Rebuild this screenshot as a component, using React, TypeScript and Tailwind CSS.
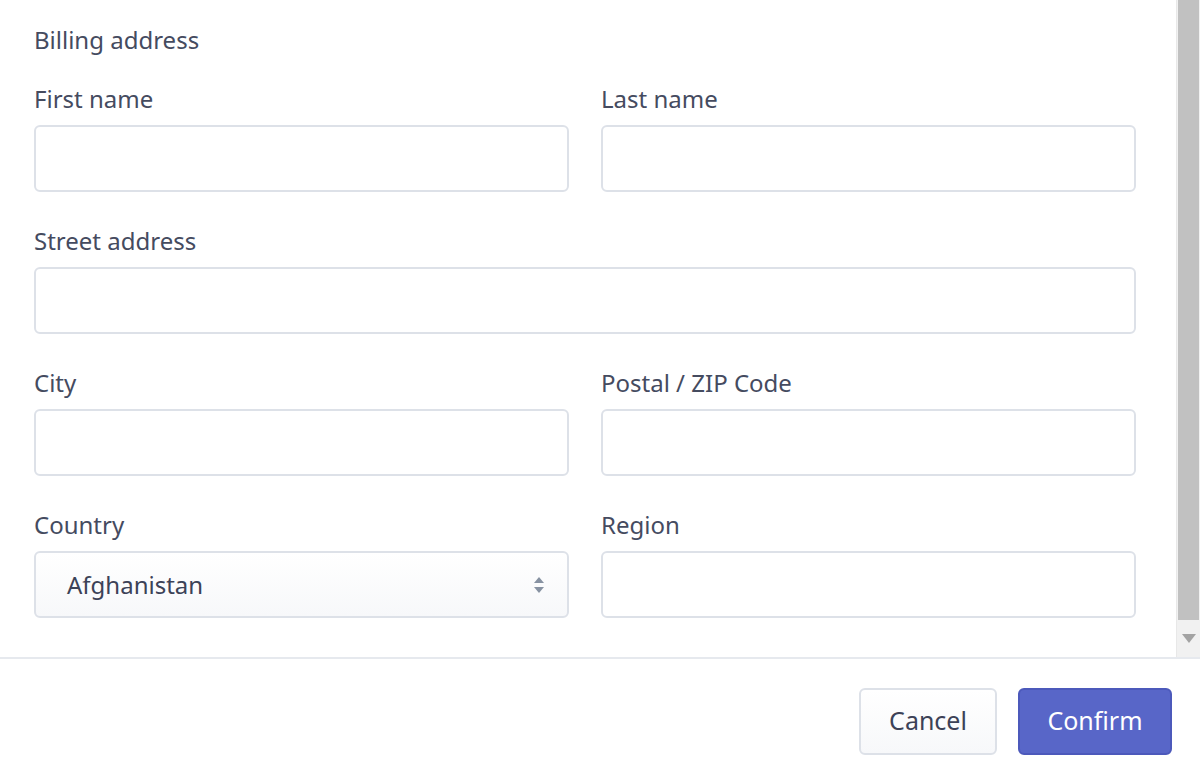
import React from "react";

const labelCls = "block text-[24px] leading-[32px] text-[#454b5f]";
const inputCls =
  "block w-full h-[67px] rounded-[6px] border-2 border-[#dde1e8] bg-white";

function Field({ label, className = "" }: { label: string; className?: string }) {
  return (
    <div className={className}>
      <label className={labelCls}>{label}</label>
      <div className="mt-[10px]">
        <input className={inputCls} />
      </div>
    </div>
  );
}

export default function App() {
  return (
    <div
      className="w-[1200px] h-[783px] bg-white flex flex-col overflow-hidden"
      style={{ fontFamily: '"Noto Sans", "Open Sans", sans-serif' }}
    >
      {/* scroll area */}
      <div className="flex h-[657px]">
        <div className="flex-1 pl-[34px] pr-[40px] pt-[24px]">
          <div className="text-[24px] leading-[32px] text-[#454b5f]">Billing address</div>
          <div className="mt-[27px] grid grid-cols-2 gap-x-[32px] gap-y-[33px]">
            <Field label="First name" />
            <Field label="Last name" />
            <Field label="Street address" className="col-span-2" />
            <Field label="City" />
            <Field label="Postal / ZIP Code" />
            <div>
              <label className={labelCls}>Country</label>
              <div className="mt-[10px] relative">
                <div className="h-[67px] rounded-[6px] border-2 border-[#dde1e8] bg-gradient-to-b from-white to-[#f7f8fa] flex items-center pl-[31px] text-[24px] text-[#3c4257]">
                  Afghanistan
                </div>
                <svg
                  className="absolute right-[24px] top-[24px]"
                  width="12"
                  height="20"
                  viewBox="0 0 12 20"
                >
                  <path d="M6 2 L11 8 H1 Z" fill="#8792a2" />
                  <path d="M6 18 L11 12 H1 Z" fill="#8792a2" />
                </svg>
              </div>
            </div>
            <Field label="Region" />
          </div>
        </div>
        {/* scrollbar */}
        <div className="w-[24px] flex flex-col bg-[#f1f1f1] border-l border-[#e8e8e8]">
          <div className="h-[620px] bg-[#c1c1c1] mx-[1px]" />
          <div className="flex-1 flex items-center justify-center">
            <svg width="14" height="9" viewBox="0 0 14 9">
              <path d="M0 0 H14 L7 9 Z" fill="#a3a3a3" />
            </svg>
          </div>
        </div>
      </div>
      {/* footer */}
      <div className="flex-1 border-t-2 border-[#e6e9ee] flex items-center justify-end gap-[21px] pr-[28px]">
        <button className="h-[67px] w-[138px] rounded-[6px] border-2 border-[#dde1e8] bg-gradient-to-b from-white to-[#f7f8fa] text-[25px] text-[#3c4257]">
          Cancel
        </button>
        <button className="h-[67px] w-[154px] rounded-[6px] border-2 border-[#4c59bb] bg-[#5866c8] text-[25px] text-white">
          Confirm
        </button>
      </div>
    </div>
  );
}
